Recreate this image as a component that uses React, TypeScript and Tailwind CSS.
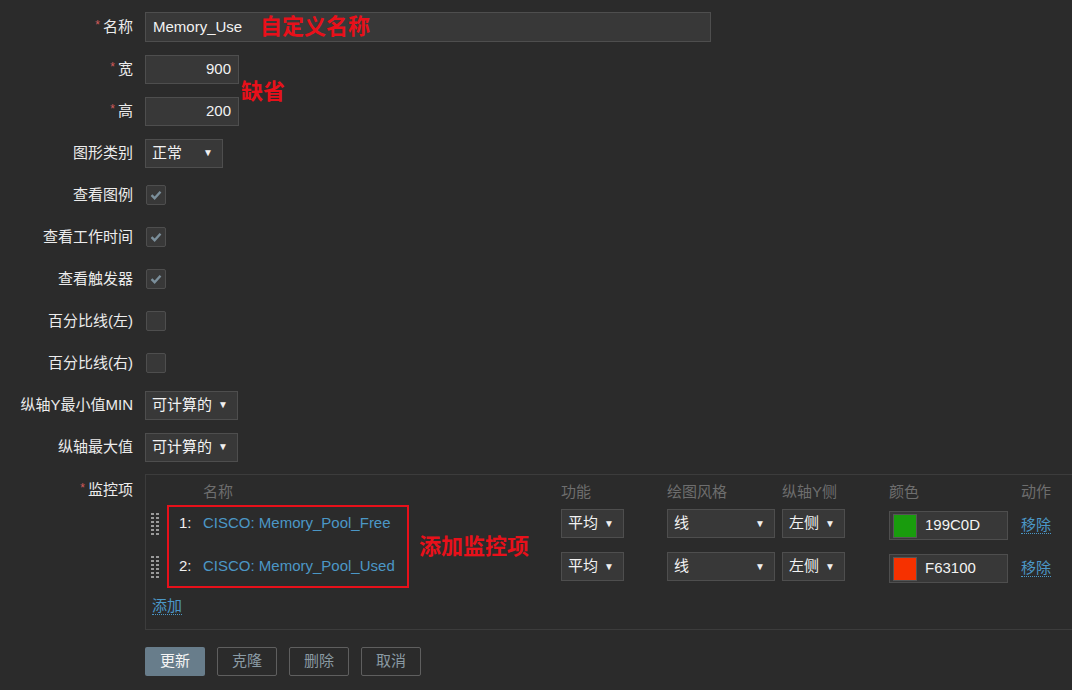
import React from 'react';

const font = { fontFamily: '"Liberation Sans", "Noto Sans CJK SC", sans-serif' };

function Arrow() {
  return <span className="text-[10px] leading-none text-[#f0f0f0]">▼</span>;
}

function Select({ value, width }: { value: string; width: string }) {
  return (
    <div className={`${width} h-[29px] flex items-center justify-between pl-[6px] pr-[9px] bg-[#383838] border border-[#4e4e4e] text-[15px] text-[#f2f2f2]`}>
      <span>{value}</span>
      <Arrow />
    </div>
  );
}

function Checkbox({ checked }: { checked?: boolean }) {
  return (
    <div className="w-[20px] h-[20px] ml-px bg-[#383838] border border-[#4e4e4e] rounded-[2px] flex items-center justify-center">
      {checked && (
        <svg width="14" height="14" viewBox="0 0 14 14">
          <path d="M2.5 7.2 L5.6 10.2 L11.5 3.8" fill="none" stroke="#7b8f9b" strokeWidth="2.4" />
        </svg>
      )}
    </div>
  );
}

function Row({ label, required, children }: { label: string; required?: boolean; children: React.ReactNode }) {
  return (
    <div className="relative h-[42px] flex items-center">
      <div className="w-[133px] text-right text-[15px] text-[#ececec] whitespace-nowrap">
        {required && <span className="text-[#d25b5b] text-[12px] mr-[3px] align-top">*</span>}
        {label}
      </div>
      <div className="ml-3 flex items-center">{children}</div>
    </div>
  );
}

function Handle() {
  return (
    <div className="grid grid-cols-2 gap-x-[2px] gap-y-[2px] w-[8px]">
      {Array.from({ length: 12 }).map((_, i) => (
        <div key={i} className="w-[3px] h-[2px] bg-[#9a9a9a]" />
      ))}
    </div>
  );
}

const items = [
  { n: '1:', name: 'CISCO: Memory_Pool_Free', color: '199C0D', swatch: 'bg-[#199c0d]' },
  { n: '2:', name: 'CISCO: Memory_Pool_Used', color: 'F63100', swatch: 'bg-[#f63100]' },
];

export default function App() {
  return (
    <div className="w-[1072px] h-[690px] overflow-hidden bg-[#2b2b2b] pt-[6px]" style={font}>
      <Row label="名称" required>
        <div className="relative w-[566px] h-[30px] flex items-center px-[7px] bg-[#383838] border border-[#4e4e4e] text-[15px] text-[#f2f2f2]">
          Memory_Use
          <span className="absolute left-[114px] top-[0px] text-[22px] font-bold text-[#e8101a] leading-[28px]">自定义名称</span>
        </div>
      </Row>
      <Row label="宽" required>
        <div className="w-[94px] h-[29px] flex items-center justify-end px-[7px] bg-[#383838] border border-[#4e4e4e] text-[15px] text-[#f2f2f2]">900</div>
        <span className="absolute left-[241px] top-[30px] text-[22px] font-bold text-[#e8101a] leading-[28px]">缺省</span>
      </Row>
      <Row label="高" required>
        <div className="w-[94px] h-[29px] flex items-center justify-end px-[7px] bg-[#383838] border border-[#4e4e4e] text-[15px] text-[#f2f2f2]">200</div>
      </Row>
      <Row label="图形类别">
        <Select value="正常" width="w-[78px]" />
      </Row>
      <Row label="查看图例"><Checkbox checked /></Row>
      <Row label="查看工作时间"><Checkbox checked /></Row>
      <Row label="查看触发器"><Checkbox checked /></Row>
      <Row label="百分比线(左)"><Checkbox /></Row>
      <Row label="百分比线(右)"><Checkbox /></Row>
      <Row label="纵轴Y最小值MIN">
        <Select value="可计算的" width="w-[93px]" />
      </Row>
      <Row label="纵轴最大值">
        <Select value="可计算的" width="w-[93px]" />
      </Row>

      {/* items table */}
      <div className="flex mt-[6px]">
        <div className="w-[133px] pt-[5px] text-right text-[15px] text-[#ececec]">
          <span className="text-[#d25b5b] text-[12px] mr-[3px] align-top">*</span>监控项
        </div>
        <div className="relative ml-3 flex-1 border-t border-l border-b border-[#3c3c3c] pb-[12px]">
          <div className="h-[34px] flex items-center text-[15px] text-[#6e6e6e]">
            <div className="w-[57px]" />
            <div className="w-[358px]">名称</div>
            <div className="w-[106px]">功能</div>
            <div className="w-[115px]">绘图风格</div>
            <div className="w-[107px]">纵轴Y侧</div>
            <div className="w-[132px]">颜色</div>
            <div>动作</div>
          </div>
          {items.map((it) => (
            <div key={it.n} className="h-[43px] flex items-start">
              <div className="w-[33px] pl-[5px] pt-[4px]"><Handle /></div>
              <div className="w-[24px] h-[29px] flex items-center text-[15px] text-[#f0f0f0]">{it.n}</div>
              <div className="w-[358px] h-[29px] flex items-center text-[15px] text-[#4b97c6]">{it.name}</div>
              <div className="w-[106px]"><Select value="平均" width="w-[63px]" /></div>
              <div className="w-[115px]"><Select value="线" width="w-[108px]" /></div>
              <div className="w-[107px]"><Select value="左侧" width="w-[63px]" /></div>
              <div className="w-[132px] pt-[2px]">
                <div className="w-[119px] h-[29px] flex items-center bg-[#383838] border border-[#4e4e4e] pl-[3px]">
                  <div className={`w-[24px] h-[24px] ${it.swatch} border border-[#555]`} />
                  <span className="ml-[8px] text-[15px] text-[#f2f2f2]">{it.color}</span>
                </div>
              </div>
              <div className="h-[31px] flex items-center">
                <span className="text-[15px] text-[#4b97c6] border-b border-dotted border-[#4b97c6] leading-[17px]">移除</span>
              </div>
            </div>
          ))}
          <div className="h-[22px] flex items-center pl-[6px]">
            <span className="text-[15px] text-[#4b97c6] border-b border-dotted border-[#4b97c6] leading-[17px]">添加</span>
          </div>

          {/* annotation overlay */}
          <div className="absolute left-[21px] top-[30px] w-[242px] h-[83px] border-2 border-[#e8101a]" />
          <span className="absolute left-[273px] top-[58px] text-[22px] font-bold text-[#e8101a] leading-[28px]">添加监控项</span>
        </div>
      </div>

      <div className="flex gap-3 ml-[145px] mt-[17px]">
        <button className="w-[60px] h-[29px] rounded-[2px] bg-[#687d8b] text-[15px] text-[#f4f4f4]">更新</button>
        <button className="w-[60px] h-[29px] rounded-[2px] border border-[#5f5f5f] text-[15px] text-[#8a9aa3]">克隆</button>
        <button className="w-[60px] h-[29px] rounded-[2px] border border-[#5f5f5f] text-[15px] text-[#8a9aa3]">删除</button>
        <button className="w-[60px] h-[29px] rounded-[2px] border border-[#5f5f5f] text-[15px] text-[#8a9aa3]">取消</button>
      </div>
    </div>
  );
}
